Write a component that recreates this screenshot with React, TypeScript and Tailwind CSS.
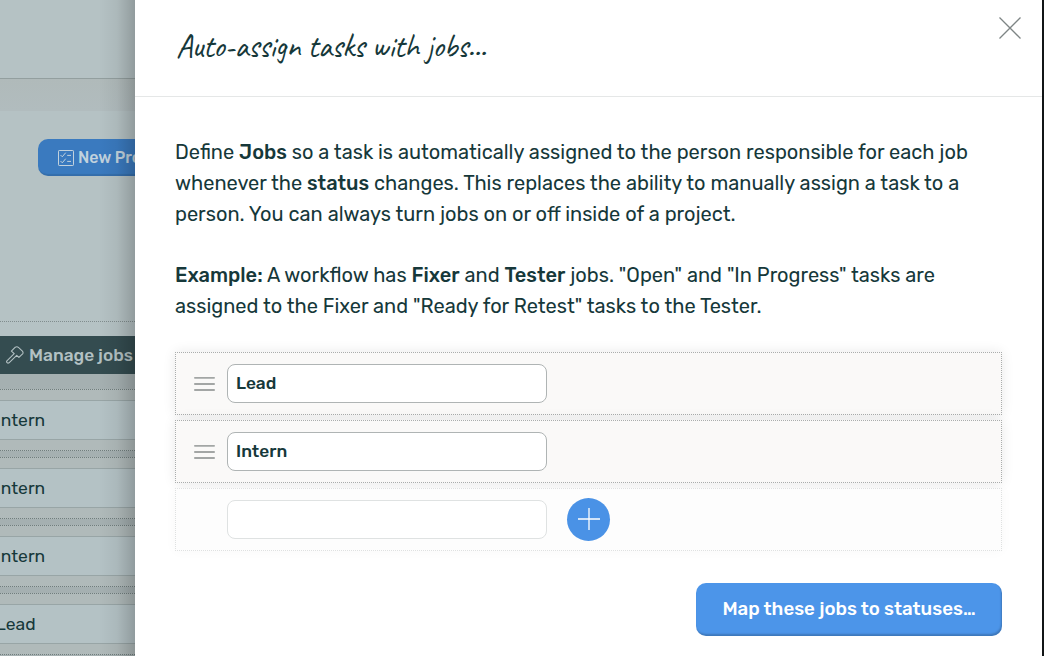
import type { ReactNode } from "react";

function Line({ children }: { children: ReactNode }) {
  return <div className="h-[30.8px] whitespace-nowrap">{children}</div>;
}

function Strong({ children }: { children: ReactNode }) {
  return <b className="font-medium">{children}</b>;
}

function Burger() {
  return (
    <svg width="21" height="16" viewBox="0 0 21 16" className="relative top-[0.5px] block" stroke="#a3a6a5" strokeWidth="1.8" strokeLinecap="round">
      <path d="M.9 1.8h19.2M.9 8h19.2M.9 14h19.2" />
    </svg>
  );
}

function JobRow({ value }: { value: string }) {
  return (
    <div className="flex h-[63px] items-center border border-dotted border-[#aaadad] bg-[#faf9f8] pl-[18px] shadow-[0_0_12px_rgba(0,0,0,0.09)]">
      <Burger />
      <div className="ml-3 flex h-[39px] w-80 items-center rounded-[8px] border border-[#afb4b4] bg-white px-2 pt-px text-[17.3px] font-medium">
        {value}
      </div>
    </div>
  );
}

function BackRow({ value }: { value: string }) {
  return (
    <div className="h-[62px] shrink-0 border-y border-dotted border-[#717e7e] bg-[#b0baba] py-[10px]">
      <div className="flex h-10 items-center border-y border-[#98a5a6] bg-[#b4c2c5] pt-px text-[17.5px]">
        <span className="-ml-1">{value}</span>
      </div>
    </div>
  );
}

export default function App() {
  return (
    <div className="flex h-[656px] w-[1044px] overflow-hidden bg-[#111516] font-['Rubik','Roboto',sans-serif] text-[#16383a]">
      <aside className="relative flex w-[135px] shrink-0 flex-col overflow-hidden bg-[#b5c2c4]">
        <div className="h-[79px] shrink-0 border-b border-[#939f9f]" />
        <div className="h-[32px] shrink-0 bg-linear-to-b from-[#b0baba] to-[#b1bcbe]" />
        <div className="h-[210px] shrink-0 pt-[28px] pl-[38px]">
          <div className="flex h-[37px] w-[150px] items-center rounded-[10px] bg-[#3a7abf] pl-5 text-[16px] font-medium text-[#c2d2dd] shadow-[inset_-1px_-2px_1px_rgba(0,0,0,0.1)]">
            <svg width="16" height="16" viewBox="0 0 16 16" fill="none" stroke="currentColor" className="mr-1 shrink-0">
              <rect x=".5" y=".5" width="15" height="15" rx=".7" />
              <path d="m2.5 5 1.8 1.8 3.4-4.1M9.2 5.4h3.8M2.5 11l1.8 1.8 3.4-4.1M9.2 11.4h3.8" />
            </svg>
            <span className="whitespace-nowrap">New Project</span>
          </div>
        </div>
        <div className="h-[15px] shrink-0 border-t border-dotted border-[#818d8e]" />
        <div className="flex h-[38px] shrink-0 items-center bg-[#344c50] pl-[6px] text-[17.3px] font-medium text-[#b3c1c3]">
          <svg width="18" height="18" viewBox="0 0 18 18" fill="none" stroke="currentColor" strokeWidth="1.1" strokeLinejoin="round" className="mr-[5px] shrink-0">
            <path d="M5.4 5.2 9.3 1.2c1.2-.7 2.6-.3 3.4.5l3.7 3.5c.8.9.9 1.7.2 2.6l-3.7 3.6-2.2-2L3 16.8c-1.4 1-3-.7-2.1-2L8.2 7.7Z" />
          </svg>
          <span className="relative top-[0.5px] whitespace-nowrap">Manage jobs</span>
        </div>
        <div className="flex shrink-0 flex-col gap-[6px] bg-[#a5b0b1] pt-[15px]">
          <BackRow value="Intern" />
          <BackRow value="Intern" />
          <BackRow value="Intern" />
          <BackRow value="Lead" />
          <BackRow value="Lead" />
        </div>
        <div className="absolute inset-y-0 right-0 w-9 bg-linear-to-r from-transparent via-black/5 to-black/20" />
      </aside>

      <main className="flex w-[907px] shrink-0 flex-col bg-white">
        <header className="flex h-[97px] shrink-0 items-start justify-between border-b border-[#e5e7e7] pr-[21px] pl-[41px]">
          <h1 className="mt-[26px] scale-y-[1.1] text-[32px] leading-10 font-medium tracking-[-0.3px] whitespace-nowrap font-['Caveat','Lato',cursive]">
            Auto-assign tasks with jobs...
          </h1>
          <svg width="22" height="22" viewBox="0 0 22 22" className="mt-[17px]" stroke="#7e8585" strokeWidth="1.3">
            <path d="m.5.5 21 21M21.5.5l-21 21" />
          </svg>
        </header>
        <section className="flex flex-col px-10 pt-[40px]">
          <div className="text-[20px] leading-[30.8px]">
            <Line>Define <Strong>Jobs</Strong> so a task is automatically assigned to the person responsible for each job</Line>
            <Line>whenever the <Strong>status</Strong> changes. This replaces the ability to manually assign a task to a</Line>
            <Line>person. You can always turn jobs on or off inside of a project.</Line>
            <div className="h-[30.8px]" />
            <Line><Strong>Example:</Strong> A workflow has <Strong>Fixer</Strong> and <Strong>Tester</Strong> jobs. "Open" and "In Progress" tasks are</Line>
            <Line>assigned to the Fixer and "Ready for Retest" tasks to the Tester.</Line>
          </div>
          <div className="mt-[30px] flex flex-col gap-[5px]">
            <JobRow value="Lead" />
            <JobRow value="Intern" />
            <div className="flex h-[63px] items-center border border-dotted border-[#dfe1e1] bg-[#fdfdfd] pl-[51px] shadow-[0_0_12px_rgba(0,0,0,0.03)]">
              <div className="h-[39px] w-80 rounded-[8px] border border-[#dfe2e2] bg-white" />
              <div className="ml-5 flex size-[43px] items-center justify-center rounded-full bg-[#4a92e6]">
                <svg width="22" height="22" viewBox="0 0 22 22" stroke="white" strokeWidth="1.3">
                  <path d="M0 11h22M11 0v22" />
                </svg>
              </div>
            </div>
          </div>
          <div className="mt-8 flex h-[53px] w-[306px] items-center justify-center self-end rounded-[10px] bg-[#4c95e9] text-[18.7px] font-medium whitespace-nowrap text-white shadow-[inset_-1px_-2px_2px_rgba(0,0,0,0.2)]">
            Map these jobs to statuses…
          </div>
        </section>
      </main>
    </div>
  );
}
